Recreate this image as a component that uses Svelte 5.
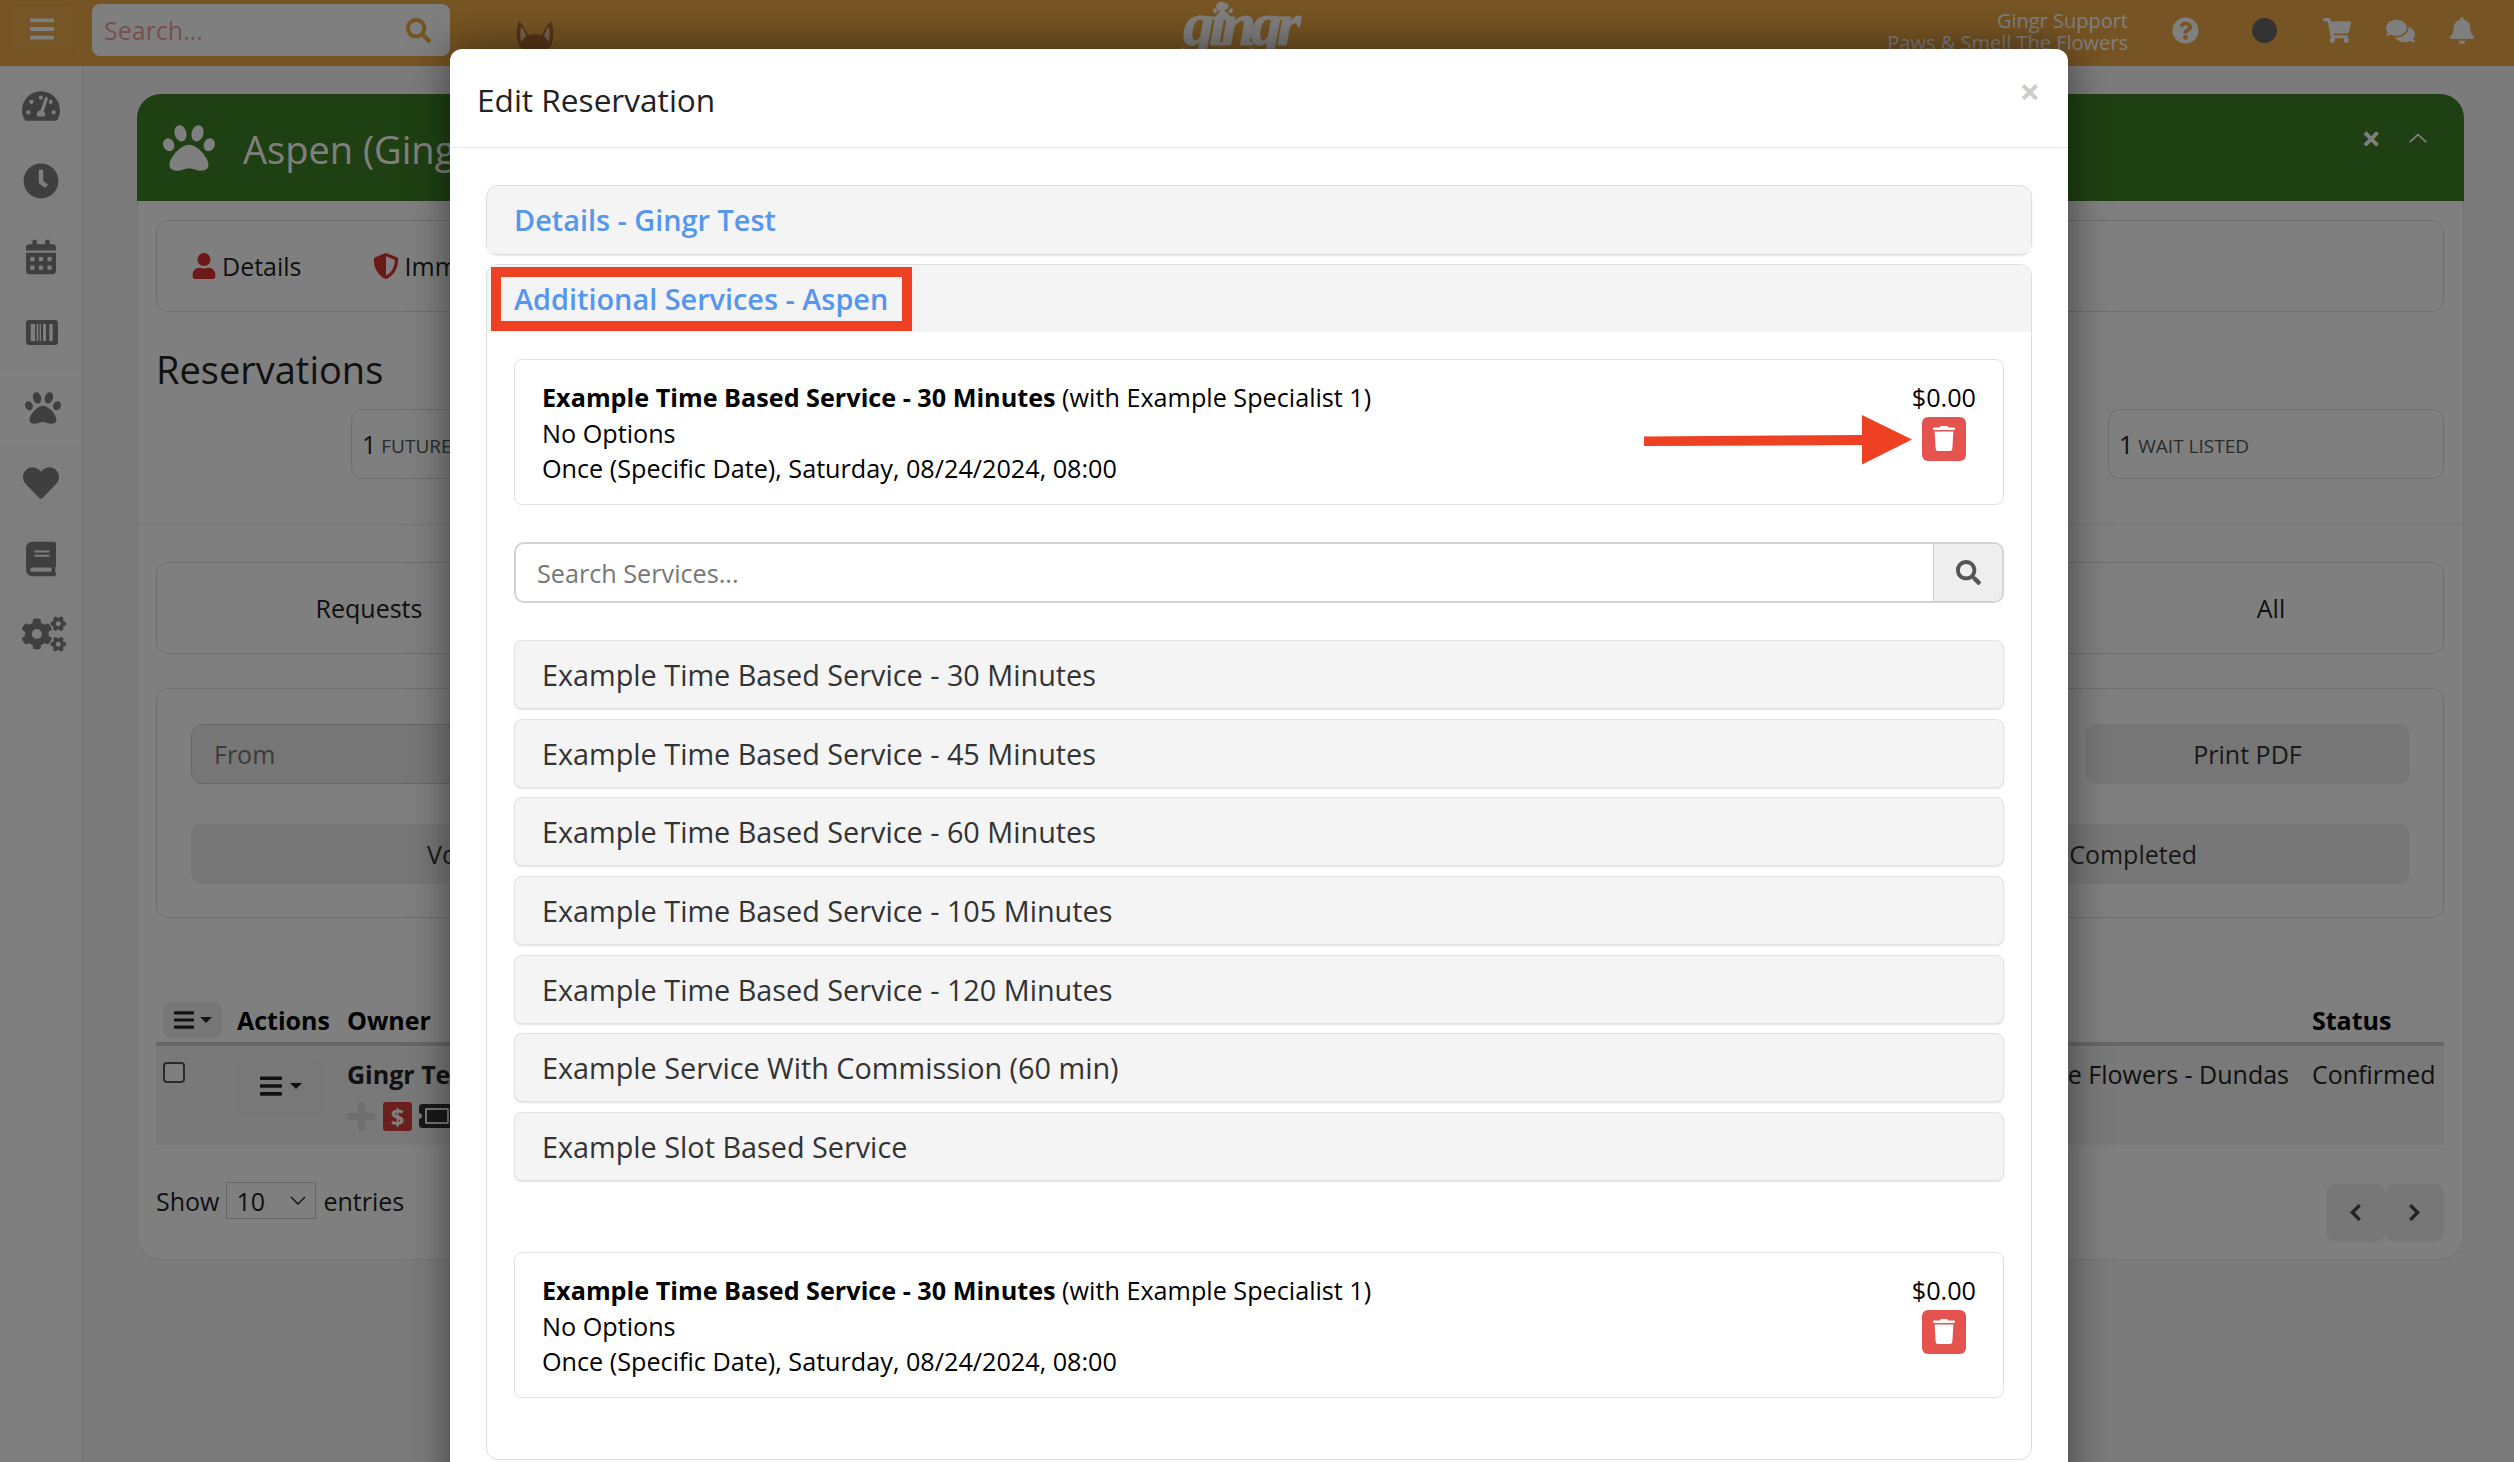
<script>
  const I = {
    search: "M505 442.7L405.3 343c-4.5-4.5-10.6-7-17-7H372c27.6-35.3 44-79.7 44-128C416 93.1 322.9 0 208 0S0 93.1 0 208s93.1 208 208 208c48.3 0 92.7-16.4 128-44v16.3c0 6.4 2.5 12.5 7 17l99.7 99.7c9.4 9.4 24.6 9.4 33.9 0l28.3-28.3c9.4-9.4 9.4-24.6.1-34zM208 336c-70.7 0-128-57.2-128-128 0-70.7 57.2-128 128-128 70.7 0 128 57.2 128 128 0 70.7-57.2 128-128 128z",
    trash: "M432 32H312l-9.4-18.7A24 24 0 0 0 281.1 0H166.8a23.72 23.72 0 0 0-21.4 13.3L136 32H16A16 16 0 0 0 0 48v16a16 16 0 0 0 16 16h416a16 16 0 0 0 16-16V48a16 16 0 0 0-16-16zM53.2 467a48 48 0 0 0 47.9 45h245.8a48 48 0 0 0 47.9-45L416 112H32z",
    clock: "M256,8C119,8,8,119,8,256S119,504,256,504,504,393,504,256,393,8,256,8Zm92.49,313h0l-20,25a16,16,0,0,1-22.49,2.5h0l-67-49.72a40,40,0,0,1-15-31.23V112a16,16,0,0,1,16-16h32a16,16,0,0,1,16,16V256l58,42.5A16,16,0,0,1,348.49,321Z",
    paw: "M256 224c-79.41 0-192 122.76-192 200.25 0 34.9 26.81 55.75 71.74 55.75 48.84 0 81.09-25.08 120.26-25.08 39.51 0 71.85 25.08 120.26 25.08 44.93 0 71.74-20.85 71.74-55.75C448 346.76 335.41 224 256 224zm-147.28-12.61c-10.4-34.65-42.44-57.09-71.56-50.13-29.12 6.96-44.29 40.69-33.89 75.34 10.4 34.65 42.44 57.09 71.56 50.13 29.12-6.96 44.29-40.69 33.89-75.34zm84.72-20.78c30.94-8.14 46.42-49.94 34.58-93.36s-46.52-72.01-77.46-63.87-46.42 49.94-34.58 93.36c11.84 43.42 46.52 72.01 77.46 63.87zm281.39-29.34c-29.12-6.96-61.15 15.48-71.56 50.13-10.4 34.65 4.77 68.38 33.89 75.34 29.12 6.96 61.15-15.48 71.56-50.13 10.4-34.65-4.77-68.38-33.89-75.34zm-156.27 29.34c30.94 8.14 65.62-20.45 77.46-63.87 11.84-43.42-3.64-85.21-34.58-93.36s-65.62 20.45-77.46 63.87c-11.84 43.42 3.64 85.22 34.58 93.36z",
    heart: "M462.3 62.6C407.5 15.9 326 24.3 275.7 76.2L256 96.5l-19.7-20.3C186.1 24.3 104.5 15.9 49.7 62.6c-62.8 53.6-66.1 149.8-9.9 207.9l193.5 199.8c12.5 12.9 32.8 12.9 45.3 0l193.5-199.8c56.3-58.1 53-154.3-9.8-207.9z",
    bell: "M224 512c35.32 0 63.97-28.65 63.97-64H160.03c0 35.35 28.65 64 63.97 64zm215.39-149.71c-19.32-20.76-55.47-51.99-55.47-154.29 0-77.7-54.48-139.9-127.94-155.16V32c0-17.67-14.32-32-31.98-32s-31.98 14.33-31.98 32v20.84C118.56 68.1 64.08 130.3 64.08 208c0 102.3-36.15 133.53-55.47 154.29-6 6.45-8.66 14.16-8.61 21.71.11 16.4 12.98 32 32.1 32h383.8c19.12 0 32-15.6 32.1-32 .05-7.55-2.61-15.27-8.61-21.71z",
    cart: "M528.12 301.319l47.273-208C578.806 78.301 567.391 64 551.99 64H159.208l-9.166-44.81C147.758 8.021 137.93 0 126.529 0H24C10.745 0 0 10.745 0 24v16c0 13.255 10.745 24 24 24h69.883l70.248 343.435C147.325 417.1 136 435.222 136 456c0 30.928 25.072 56 56 56s56-25.072 56-56c0-15.674-6.447-29.835-16.824-40h209.647C430.447 426.165 424 440.326 424 456c0 30.928 25.072 56 56 56s56-25.072 56-56c0-22.172-12.888-41.332-31.579-50.405l5.517-24.276c3.413-15.018-8.002-29.319-23.403-29.319H218.117l-6.545-32h293.145c11.206 0 20.92-7.754 23.403-18.681z",
    comments: "M416 192c0-88.4-93.1-160-208-160S0 103.6 0 192c0 34.3 14.1 65.9 38 92-13.4 30.2-35.5 54.2-35.8 54.5-2.2 2.3-2.8 5.7-1.5 8.7S4.8 352 8 352c36.6 0 66.9-12.3 88.7-25 32.2 15.7 70.3 25 111.3 25 114.9 0 208-71.6 208-160zm122 220c23.9-26 38-57.7 38-92 0-66.9-53.5-124.2-129.3-148.1.9 6.6 1.3 13.3 1.3 20.1 0 105.9-107.7 192-240 192-10.8 0-21.3-.8-31.7-1.9C207.8 439.6 281.8 480 368 480c41 0 79.1-9.2 111.3-25 21.8 12.7 52.1 25 88.7 25 3.2 0 6.1-1.9 7.3-4.8 1.3-2.9.7-6.3-1.5-8.7-.3-.3-22.4-24.2-35.8-54.5z",
    help: "M504 256c0 136.997-111.043 248-248 248S8 392.997 8 256C8 119.083 119.043 8 256 8s248 111.083 248 248zM262.655 90c-54.497 0-89.255 22.957-116.549 63.758-3.536 5.286-2.353 12.415 2.715 16.258l34.699 26.31c5.205 3.947 12.621 3.008 16.665-2.122 17.864-22.658 30.113-35.797 57.303-35.797 20.429 0 45.698 13.148 45.698 32.958 0 14.976-12.363 22.667-32.534 33.976C247.128 238.528 216 254.941 216 296v4c0 6.627 5.373 12 12 12h56c6.627 0 12-5.373 12-12v-1.333c0-28.462 83.186-29.647 83.186-106.667 0-58.002-60.165-102-116.531-102zM256 338c-25.365 0-46 20.635-46 46 0 25.364 20.635 46 46 46s46-20.636 46-46c0-25.365-20.635-46-46-46z",
    bars: "M16 132h416c8.837 0 16-7.163 16-16V76c0-8.837-7.163-16-16-16H16C7.163 60 0 67.163 0 76v40c0 8.837 7.163 16 16 16zm0 160h416c8.837 0 16-7.163 16-16v-40c0-8.837-7.163-16-16-16H16c-8.837 0-16 7.163-16 16v40c0 8.837 7.163 16 16 16zm0 160h416c8.837 0 16-7.163 16-16v-40c0-8.837-7.163-16-16-16H16c-8.837 0-16 7.163-16 16v40c0 8.837 7.163 16 16 16z",
    user: "M224 256c70.7 0 128-57.3 128-128S294.7 0 224 0 96 57.3 96 128s57.3 128 128 128zm89.6 32h-16.7c-22.2 10.2-46.9 16-72.9 16s-50.6-5.8-72.9-16h-16.7C60.2 288 0 348.2 0 422.4V464c0 26.5 21.5 48 48 48h352c26.5 0 48-21.5 48-48v-41.6c0-74.2-60.2-134.4-134.4-134.4z",
    shield: "M466.5 83.7l-192-80a48.15 48.15 0 0 0-36.9 0l-192 80C27.7 91.1 16 108.6 16 128c0 198.5 114.5 335.7 221.5 380.3 11.8 4.9 25.1 4.9 36.9 0C360.1 472.6 496 349.3 496 128c0-19.4-11.7-36.9-29.5-44.3zM256.1 446.3l-.1-381 175.9 73.3c-3.3 151.4-82.1 261.1-175.8 307.7z",
    cal: "M0 464c0 26.5 21.5 48 48 48h352c26.5 0 48-21.5 48-48V192H0v272zm320-196c0-6.6 5.4-12 12-12h40c6.6 0 12 5.4 12 12v40c0 6.6-5.4 12-12 12h-40c-6.6 0-12-5.4-12-12v-40zm0 128c0-6.6 5.4-12 12-12h40c6.6 0 12 5.4 12 12v40c0 6.6-5.4 12-12 12h-40c-6.6 0-12-5.4-12-12v-40zM192 268c0-6.6 5.4-12 12-12h40c6.6 0 12 5.4 12 12v40c0 6.6-5.4 12-12 12h-40c-6.6 0-12-5.4-12-12v-40zm0 128c0-6.6 5.4-12 12-12h40c6.6 0 12 5.4 12 12v40c0 6.6-5.4 12-12 12h-40c-6.6 0-12-5.4-12-12v-40zM64 268c0-6.6 5.4-12 12-12h40c6.6 0 12 5.4 12 12v40c0 6.6-5.4 12-12 12H76c-6.6 0-12-5.4-12-12v-40zm0 128c0-6.6 5.4-12 12-12h40c6.6 0 12 5.4 12 12v40c0 6.6-5.4 12-12 12H76c-6.6 0-12-5.4-12-12v-40zM400 64h-48V16c0-8.8-7.2-16-16-16h-32c-8.8 0-16 7.2-16 16v48H160V16c0-8.8-7.2-16-16-16h-32c-8.8 0-16 7.2-16 16v48H48C21.5 64 0 85.5 0 112v48h448v-48c0-26.5-21.5-48-48-48z",
    gauge: "M288 32C128.94 32 0 160.94 0 320c0 52.8 14.25 102.26 39.06 144.8 5.61 9.62 16.3 15.2 27.44 15.2h443c11.14 0 21.83-5.58 27.44-15.2C561.75 422.26 576 372.8 576 320c0-159.06-128.94-288-288-288zm0 64c14.71 0 26.58 10.13 30.32 23.65-1.11 2.26-2.64 4.23-3.45 6.67l-9.22 27.67c-5.13 3.49-10.97 6.01-17.64 6.01-17.67 0-32-14.33-32-32S270.33 96 288 96zM96 384c-17.67 0-32-14.33-32-32s14.33-32 32-32 32 14.33 32 32-14.33 32-32 32zm48-160c-17.67 0-32-14.33-32-32s14.33-32 32-32 32 14.33 32 32-14.33 32-32 32zm246.77-72.41l-61.33 184C343.13 347.33 352 364.54 352 384c0 11.72-3.38 22.55-8.88 32H232.88c-5.5-9.45-8.88-20.28-8.88-32 0-33.94 26.5-61.43 59.9-63.59l61.34-184.01c4.17-12.56 17.73-19.45 30.36-15.17 12.57 4.19 19.35 17.79 15.17 30.36zm14.66 57.2l15.52-46.55c3.47-1.29 7.13-2.23 11.05-2.23 17.67 0 32 14.33 32 32s-14.33 32-32 32c-11.38-.01-20.89-6.28-26.57-15.22zM480 384c-17.67 0-32-14.33-32-32s14.33-32 32-32 32 14.33 32 32-14.33 32-32 32z",
    barcode: "M3 0h26a3 3 0 0 1 3 3v19a3 3 0 0 1-3 3H3a3 3 0 0 1-3-3V3a3 3 0 0 1 3-3zM4.7 4v17H9V4zM10.6 4v17h1.7V4zM13.7 4v17H15V4zM17 4v17h3V4zM23.3 4v17h3.4V4z",
    book: "M448 360V24c0-13.3-10.7-24-24-24H96C43 0 0 43 0 96v320c0 53 43 96 96 96h328c13.3 0 24-10.7 24-24v-16c0-7.5-3.5-14.3-8.9-18.7-4.2-15.4-4.2-59.3 0-74.7 5.4-4.3 8.9-11.1 8.9-18.6zM128 134c0-3.3 2.7-6 6-6h212c3.3 0 6 2.7 6 6v20c0 3.3-2.7 6-6 6H134c-3.3 0-6-2.7-6-6v-20zm0 64c0-3.3 2.7-6 6-6h212c3.3 0 6 2.7 6 6v20c0 3.3-2.7 6-6 6H134c-3.3 0-6-2.7-6-6v-20zm253.4 250H96c-17.7 0-32-14.3-32-32 0-17.6 14.4-32 32-32h285.4c-1.9 17.1-1.9 46.9 0 64z",
    cogs: "M512.1 191l-8.2 14.3c-3 5.3-9.4 7.5-15.1 5.4-11.8-4.4-22.6-10.7-32.1-18.6-4.6-3.8-5.8-10.5-2.8-15.7l8.2-14.3c-6.9-8-12.3-17.3-15.9-27.4h-16.5c-6 0-11.2-4.3-12.2-10.3-2-12-2.1-24.6 0-37.1 1-6 6.2-10.4 12.2-10.4h16.5c3.6-10.1 9-19.4 15.9-27.4l-8.2-14.3c-3-5.2-1.9-11.9 2.8-15.7 9.5-7.9 20.4-14.2 32.1-18.6 5.7-2.1 12.1.1 15.1 5.4l8.2 14.3c10.5-1.9 21.2-1.9 31.7 0L552 6.3c3-5.3 9.4-7.5 15.1-5.4 11.8 4.4 22.6 10.7 32.1 18.6 4.6 3.8 5.8 10.5 2.8 15.7l-8.2 14.3c6.9 8 12.3 17.3 15.9 27.4h16.5c6 0 11.2 4.3 12.2 10.3 2 12 2.1 24.6 0 37.1-1 6-6.2 10.4-12.2 10.4h-16.5c-3.6 10.1-9 19.4-15.9 27.4l8.2 14.3c3 5.2 1.9 11.9-2.8 15.7-9.5 7.9-20.4 14.2-32.1 18.6-5.7 2.1-12.1-.1-15.1-5.4l-8.2-14.3c-10.4 1.9-21.2 1.9-31.7 0zm-10.5-58.8c38.5 29.6 82.4-14.3 52.8-52.8-38.5-29.7-82.4 14.3-52.8 52.8zM386.3 286.1l33.7 16.8c10.1 5.8 14.5 18.1 10.5 29.1-8.9 24.2-26.4 46.4-42.6 65.8-7.4 8.9-20.2 11.1-30.3 5.3l-29.1-16.8c-16 13.7-34.6 24.6-54.9 31.7v33.6c0 11.6-8.3 21.6-19.7 23.6-24.6 4.2-50.4 4.4-75.9 0-11.5-2-20-11.9-20-23.6V418c-20.3-7.2-38.9-18-54.9-31.7L74 403c-10 5.8-22.9 3.6-30.3-5.3-16.2-19.4-33.3-41.6-42.2-65.7-4-10.9.4-23.2 10.5-29.1l33.3-16.8c-3.9-20.9-3.9-42.4 0-63.4L12 205.8c-10.1-5.8-14.6-18.1-10.5-29 8.9-24.2 26-46.4 42.2-65.8 7.4-8.9 20.2-11.1 30.3-5.3l29.1 16.8c16-13.7 34.6-24.6 54.9-31.7V57.1c0-11.5 8.2-21.5 19.6-23.5 24.6-4.2 50.5-4.4 76-.1 11.5 2 20 11.9 20 23.6v33.6c20.3 7.2 38.9 18 54.9 31.7l29.1-16.8c10-5.8 22.9-3.6 30.3 5.3 16.2 19.4 33.2 41.6 42.1 65.8 4 10.9.1 23.2-10 29.1l-33.7 16.8c3.9 21 3.9 42.5 0 63.5zm-117.6 21.1c59.2-77-28.7-164.9-105.7-105.7-59.2 77 28.7 164.9 105.7 105.7zm243.4 182.7l-8.2 14.3c-3 5.3-9.4 7.5-15.1 5.4-11.8-4.4-22.6-10.7-32.1-18.6-4.6-3.8-5.8-10.5-2.8-15.7l8.2-14.3c-6.9-8-12.3-17.3-15.9-27.4h-16.5c-6 0-11.2-4.3-12.2-10.3-2-12-2.1-24.6 0-37.1 1-6 6.2-10.4 12.2-10.4h16.5c3.6-10.1 9-19.4 15.9-27.4l-8.2-14.3c-3-5.2-1.9-11.9 2.8-15.7 9.5-7.9 20.4-14.2 32.1-18.6 5.7-2.1 12.1.1 15.1 5.4l8.2 14.3c10.5-1.9 21.2-1.9 31.7 0l8.2-14.3c3-5.3 9.4-7.5 15.1-5.4 11.8 4.4 22.6 10.7 32.1 18.6 4.6 3.8 5.8 10.5 2.8 15.7l-8.2 14.3c6.9 8 12.3 17.3 15.9 27.4h16.5c6 0 11.2 4.3 12.2 10.3 2 12 2.1 24.6 0 37.1-1 6-6.2 10.4-12.2 10.4h-16.5c-3.6 10.1-9 19.4-15.9 27.4l8.2 14.3c3 5.2 1.9 11.9-2.8 15.7-9.5 7.9-20.4 14.2-32.1 18.6-5.7 2.1-12.1-.1-15.1-5.4l-8.2-14.3c-10.4 1.9-21.2 1.9-31.7 0zM501.6 431c38.5 29.6 82.4-14.3 52.8-52.8-38.5-29.6-82.4 14.3-52.8 52.8z",
    ticket: "M128 160h320v192H128V160zm400 96c0 26.51 21.49 48 48 48v96c0 26.51-21.49 48-48 48H48c-26.51 0-48-21.49-48-48v-96c26.51 0 48-21.49 48-48s-21.49-48-48-48v-96c0-26.51 21.49-48 48-48h480c26.51 0 48 21.49 48 48v96c-26.51 0-48 21.49-48 48zm-48-104c0-13.255-10.745-24-24-24H120c-13.255 0-24 10.745-24 24v208c0 13.255 10.745 24 24 24h336c13.255 0 24-10.745 24-24V152z"
  };
  const side = [
    { d: I.gauge, vb: "0 0 576 512", w: 38, h: 36 },
    { d: I.clock, vb: "0 0 512 512", w: 36, h: 36 },
    { d: I.cal, vb: "0 0 448 512", w: 30, h: 36 },
    { d: I.barcode, vb: "0 0 32 25", w: 32, h: 25, rule: "evenodd" },
    { d: I.paw, vb: "0 0 512 512", w: 36, h: 36, active: true },
    { d: I.heart, vb: "0 0 512 512", w: 36, h: 36 },
    { d: I.book, vb: "0 0 448 512", w: 30, h: 36 },
    { d: I.cogs, vb: "0 0 640 512", w: 44, h: 36 }
  ];
  const services = [
    "Example Time Based Service - 30 Minutes",
    "Example Time Based Service - 45 Minutes",
    "Example Time Based Service - 60 Minutes",
    "Example Time Based Service - 105 Minutes",
    "Example Time Based Service - 120 Minutes",
    "Example Service With Commission (60 min)",
    "Example Slot Based Service"
  ];
  const added = [0, 1];
</script>

<div class="page">
  <header class="top">
    <button class="ham" aria-label="menu"><svg viewBox="0 0 448 512" width="24" height="28"><path d={I.bars} /></svg></button>
    <div class="topsearch">
      <span>Search...</span>
      <svg viewBox="0 0 512 512" width="25" height="25"><path d={I.search} /></svg>
    </div>
    <svg class="cat" viewBox="0 0 40 32" width="40" height="32">
      <path d="M4 0c3 3 7 9 9 14 4-1 10-1 14 0 2-5 6-11 9-14 3 7 3 15 1 22-2 6-9 10-17 10S5 28 3 22C1 15 1 7 4 0z" fill="#b0682e" />
      <path d="M6 6c2 2 4 5 5 9l-5 6c-1-5-1-10 0-15zM34 6c-2 2-4 5-5 9l5 6c1-5 1-10 0-15z" fill="#e8c9a0" />
    </svg>
    <div class="logo">
      <svg class="logopaw" viewBox="0 0 512 512" width="20" height="20"><path d={I.paw} /></svg>
      <span>gingr</span>
    </div>
    <div class="account">
      <span>Gingr Support</span>
      <span>Paws &amp; Smell The Flowers</span>
    </div>
    <div class="topicons">
      <svg viewBox="0 0 512 512" width="27" height="27"><path d={I.help} /></svg>
      <span class="avatar"></span>
      <svg viewBox="0 0 576 512" width="28" height="25"><path d={I.cart} /></svg>
      <svg viewBox="0 0 576 512" width="29" height="26"><path d={I.comments} /></svg>
      <svg viewBox="0 0 448 512" width="24" height="27"><path d={I.bell} /></svg>
    </div>
  </header>

  <div class="main">
    <nav class="side">
      {#each side as s}
        <div class="sideitem" class:active={s.active}>
          <svg viewBox={s.vb} width={s.w} height={s.h}><path d={s.d} fill-rule={s.rule} /></svg>
        </div>
      {/each}
    </nav>
    <div class="content">
      <section class="card">
        <div class="cardhead">
          <svg viewBox="0 0 512 512" width="52" height="52"><path d={I.paw} /></svg>
          <h1>Aspen (Gingr Test)</h1>
          <span class="headbtns">
            <span class="hx">×</span>
            <svg viewBox="0 0 24 14" width="20" height="12"><path d="M2 12L12 3l10 9" fill="none" stroke="currentColor" stroke-width="2" /></svg>
          </span>
        </div>
        <div class="cardbody">
          <div class="tabs">
            <span class="tab"><svg viewBox="0 0 448 512" width="24" height="26"><path d={I.user} /></svg>Details</span>
            <span class="tab"><svg viewBox="0 0 512 512" width="26" height="26"><path d={I.shield} /></svg>Immunizations</span>
          </div>
          <h2>Reservations</h2>
          <div class="stats">
            <div class="stat"><b>1</b><small>FUTURE</small></div>
            <div class="stat wait"><b>1</b><small>WAIT LISTED</small></div>
          </div>
          <div class="rule"></div>
          <div class="bigtabs">
            <div class="bt req">Requests</div>
            <div class="bt all">All</div>
          </div>
          <div class="filters">
            <div class="frow">
              <div class="from">From</div>
              <div class="print">Print PDF</div>
            </div>
            <div class="frow second">
              <div class="fbtn">Voided</div>
              <div class="fbtn">Completed</div>
            </div>
          </div>
          <div class="thead">
            <span class="tool"><svg viewBox="0 0 448 512" width="20" height="24"><path d={I.bars} /></svg><i class="caret"></i></span>
            <b>Actions</b>
            <b>Owner</b>
            <span></span>
            <b>Status</b>
          </div>
          <div class="trow">
            <span class="check"></span>
            <span class="actbtn"><svg viewBox="0 0 448 512" width="22" height="26"><path d={I.bars} /></svg><i class="caret"></i></span>
            <div class="owner">
              <b>Gingr Test</b>
              <div class="marks">
                <svg class="plus" viewBox="0 0 29 29" width="29" height="29"><path d="M11 3.500a3.500 3.500 0 0 1 7 0V11h7.500a3.500 3.500 0 0 1 0 7H18v7.500a3.500 3.500 0 0 1-7 0V18H3.500a3.500 3.500 0 0 1 0-7H11z" /></svg>
                <span class="dollar">$</span>
                <svg viewBox="0 0 576 512" width="36" height="32"><path d={I.ticket} /></svg>
              </div>
            </div>
            <span class="loc">Paws &amp; Smell The Flowers - Dundas</span>
            <span>Confirmed</span>
          </div>
          <div class="foot">
            <span>Show</span>
            <span class="sel">10
              <svg viewBox="0 0 16 10" width="16" height="10"><path d="M1 1l7 7 7-7" fill="none" stroke="currentColor" stroke-width="1.4" /></svg>
            </span>
            <span>entries</span>
            <span class="pager">
              <span><svg viewBox="0 0 12 18" width="13" height="19"><path d="M10 2L3 9l7 7" fill="none" stroke="currentColor" stroke-width="3.2" /></svg></span>
              <span><svg viewBox="0 0 12 18" width="13" height="19"><path d="M2 2l7 7-7 7" fill="none" stroke="currentColor" stroke-width="3.2" /></svg></span>
            </span>
          </div>
        </div>
      </section>
    </div>
  </div>

  <div class="backdrop"></div>

  <div class="modal">
    <div class="mhead">
      <h3>Edit Reservation</h3>
      <span class="mclose">×</span>
    </div>
    <div class="mbody">
      <div class="panel closed"><div class="phead">Details - Gingr Test</div></div>
      <div class="panel open">
        <div class="phead">Additional Services - Aspen</div>
        <div class="pbody">
          {#each added as a, idx}
            <div class="item" class:last={idx === 1}>
              <div class="itext">
                <div><b>Example Time Based Service - 30 Minutes</b> (with Example Specialist 1)</div>
                <div>No Options</div>
                <div>Once (Specific Date), Saturday, 08/24/2024, 08:00</div>
              </div>
              <div class="iside">
                <div>$0.00</div>
                <button class="del" aria-label="delete"><svg viewBox="0 0 448 512" width="22" height="25"><path d={I.trash} /></svg></button>
              </div>
            </div>
            {#if idx === 0}
              <div class="searchbar">
                <div class="sinput">Search Services...</div>
                <div class="sbtn"><svg viewBox="0 0 512 512" width="25" height="25"><path d={I.search} /></svg></div>
              </div>
              <div class="svc">
                {#each services as s}<div class="svcrow">{s}</div>{/each}
              </div>
            {/if}
          {/each}
        </div>
      </div>
    </div>
  </div>

  <div class="redbox"></div>
  <svg class="arrow" viewBox="0 0 268 50" width="268" height="50">
    <path d="M0 21.5L218 20V0l50 24.5-50 25V30L0 31z" fill="#ee4023" />
  </svg>
</div>

<style>
  :global(body) { margin: 0; background: #f6f6f6; }
  .page {
    position: relative; width: 2514px; height: 1462px; overflow: hidden;
    font-family: "Open Sans", "Noto Sans", sans-serif; font-size: 25px; color: #000;
    background: #f6f6f6;
  }
  svg { display: block; fill: currentColor; }
  b { font-weight: 700; }

  .top { display: flex; align-items: flex-start; height: 66px; background: #eca846; }
  .ham { width: 64px; height: 50px; margin: 4px 18px 0 10px; padding: 0; border: 1px solid #e0a040; border-radius: 8px; background: #ecaa4c; color: #fff; display: flex; align-items: center; justify-content: center; }
  .topsearch { width: 358px; height: 52px; margin-top: 4px; border-radius: 8px; background: #fff; display: flex; align-items: center; justify-content: space-between; padding: 0 19px 0 12px; box-sizing: border-box; color: #eca846; flex: none; }
  .topsearch span { color: #f0a0a0; font-size: 25px; }
  .cat { margin: 21px 0 0 65px; flex: none; }
  .logo { position: relative; margin: -9px 0 0 628px; font: italic 700 62px/66px "Liberation Serif", serif; letter-spacing: -5px; color: #fff; width: 118px; flex: none; -webkit-text-stroke: 1px #fff; }
  .logopaw { position: absolute; left: 30px; top: 11px; }
  .account { margin-left: auto; display: flex; flex-direction: column; align-items: flex-end; padding-top: 9px; font-size: 20px; line-height: 24px; color: #fff; }
  .account span:last-child { margin-top: -2px; }
  .topicons { display: flex; align-items: center; margin: 17px 0 0 44px; color: #fff; height: 27px; padding-right: 40px; gap: 35px; }
  .avatar { width: 25px; height: 25px; border-radius: 50%; background: #666; margin: 0 11px 0 18px; }

  .main { display: flex; height: 1396px; }
  .side { width: 83px; flex: none; box-sizing: border-box; background: #fdfdfd; border-right: 1px solid #e5e5e5; padding-top: 2px; }
  .sideitem { height: 75.5px; display: flex; align-items: center; justify-content: center; color: #7f7f7f; }
  .sideitem:nth-child(4) { padding-left: 2px; }
  .sideitem:nth-child(5) { padding-left: 3px; }
  .sideitem:nth-child(8) { padding-left: 6px; }
  .sideitem.active { background: #fff; }
  .content { flex: 1; padding: 28px 50px 0 54px; min-width: 0; }
  .card { background: #fff; border: 1px solid #e6e6e6; border-top: 0; border-radius: 24px; height: 1166px; box-sizing: border-box; }
  .cardhead { height: 107px; background: #3f8024; border-radius: 24px 24px 0 0; display: flex; align-items: center; padding-left: 26px; color: #fff; margin: 0 -1px; }
  .cardhead h1 { font-size: 38px; font-weight: 400; margin: 2px 0 0 28px; }
  .headbtns { margin-left: auto; display: flex; align-items: center; gap: 27px; padding: 0 36px 0 0; margin-top: -19px; }
  .hx { font-size: 34px; font-weight: 700; line-height: 30px; }
  .cardbody { padding: 19px 19px 0 18px; }
  .tabs { height: 92px; border: 1px solid #ddd; border-radius: 12px; display: flex; align-items: center; gap: 71px; padding-left: 35px; box-sizing: border-box; margin-bottom: 0; }
  .tab { display: flex; align-items: center; gap: 6px; color: #222; }
  .tab svg { color: #d33; }
  h2 { font-size: 38px; font-weight: 400; margin: 31px 0 14px; line-height: 52px; color: #222; }
  .stats { display: flex; justify-content: space-between; padding: 0 0 0 195px; }
  .stat { width: 336px; height: 70px; border: 1px solid #ddd; border-radius: 12px; box-sizing: border-box; display: flex; align-items: center; gap: 5px; padding-left: 10px; color: #222; }
  .stat b { font-weight: 400; font-size: 25px; }
  .stat small { font-size: 19px; color: #555; padding-top: 3px; }
  .rule { border-top: 1px solid #e8e8e8; margin: 45px -19px 37px -18px; }
  .bigtabs { display: flex; justify-content: space-between; }
  .bt { height: 92px; border: 1px solid #ddd; border-radius: 12px; box-sizing: border-box; display: flex; align-items: center; justify-content: center; color: #222; }
  .req { width: 800px; padding-right: 374px; }
  .all { width: 800px; padding-left: 454px; }
  .filters { margin-top: 34px; height: 230px; border: 1px solid #ddd; border-radius: 12px; box-sizing: border-box; padding: 35px 33px 0 34px; }
  .frow { display: flex; justify-content: space-between; height: 60px; }
  .second { margin-top: 40px; }
  .from { width: 800px; border: 1px solid #ccc; border-radius: 12px; background: #eee; display: flex; align-items: center; padding-left: 22px; box-sizing: border-box; color: #777; font-size: 25px; }
  .print { width: 325px; background: #eee; border-radius: 10px; display: flex; align-items: center; justify-content: center; color: #333; }
  .fbtn { width: 800px; background: #eee; border-radius: 10px; display: flex; align-items: center; justify-content: center; color: #333; }
  .fbtn:first-child { padding-left: 0; justify-content: flex-start; padding-left: 236px; box-sizing: border-box; }
  .fbtn:last-child { justify-content: flex-end; padding-right: 213px; box-sizing: border-box; }
  .thead, .trow { display: grid; grid-template-columns: 81px 110px 800px 1165px 132px; }
  .thead { margin-top: 79px; height: 45px; align-items: center; border-bottom: 4px solid #ccc; font-size: 25px; }
  .tool { display: flex; align-items: center; gap: 6px; width: 59px; height: 36px; margin-left: 7px; justify-content: center; background: #eee; border-radius: 8px; color: #222; }
  .caret { width: 0; height: 0; border-left: 6px solid transparent; border-right: 6px solid transparent; border-top: 6px solid #222; }
  .trow { height: 99px; background: #f2f2f2; color: #222; align-items: start; padding-top: 11px; box-sizing: border-box; }
  .check { width: 22px; height: 21px; margin: 5px 0 0 7px; border: 2px solid #555; border-radius: 4px; box-sizing: border-box; background: #fff; }
  .actbtn { width: 88px; height: 58px; margin-top: 0; background: #f0f0f0; border-radius: 10px; display: flex; align-items: center; justify-content: center; gap: 8px; }
  .owner b { display: block; line-height: 34px; }
  .marks { display: flex; align-items: center; gap: 7px; height: 30px; margin-top: 10px; color: #333; }
  .plus { color: #ddd; flex: none; }
  .dollar { width: 29px; height: 29px; background: #d9403c; border-radius: 3px; color: #fff; font-weight: 700; font-size: 24px; line-height: 29px; text-align: center; flex: none; }
  .loc { text-align: right; padding-right: 23px; }
  .foot { display: flex; align-items: center; margin-top: 37px; height: 37px; color: #222; }
  .sel { width: 90px; height: 37px; margin: 0 7px 0 7px; border: 1px solid #ccc; box-sizing: border-box; display: flex; align-items: center; justify-content: space-between; padding: 0 9px; }
  .pager { margin-left: auto; display: flex; margin-top: 24px; }
  .pager span { width: 59px; height: 58px; background: #eee; border-radius: 10px; display: flex; align-items: center; justify-content: center; color: #444; }

  .backdrop { position: absolute; inset: 0; background: rgba(0, 0, 0, .5); }

  .modal { position: absolute; left: 450px; top: 49px; width: 1618px; height: 1500px; background: #fff; border-radius: 12px 12px 0 0; box-shadow: 0 0 40px rgba(0, 0, 0, .5); }
  .mhead { height: 99px; box-sizing: border-box; border-bottom: 1px solid #e5e5e5; display: flex; align-items: center; justify-content: space-between; padding: 2px 28px 0 27px; }
  h3 { margin: 0; font-size: 31.6px; font-weight: 400; color: #222; }
  .mclose { font-size: 36px; font-weight: 700; color: #ccc; line-height: 36px; margin-top: -14px; }
  .mbody { padding: 37px 36px 0; }
  .panel { border: 1px solid #ddd; border-radius: 12px; box-sizing: border-box; }
  .closed { height: 70px; background: #f4f4f4; box-shadow: 0 1px 2px rgba(0, 0, 0, .1); }
  .open { margin-top: 9px; height: 1196px; }
  .phead { height: 67px; display: flex; align-items: center; padding-left: 27px; font-size: 28.85px; font-weight: 600; color: #5597ec; background: #f4f4f4; border-radius: 12px 12px 0 0; }
  .pbody { padding: 27px 27px 0; }
  .item { display: flex; justify-content: space-between; height: 146px; border: 1px solid #e2e2e2; border-radius: 8px; box-sizing: border-box; padding: 20px 27px 0 27px; line-height: 35.5px; font-size: 25.2px; }
  .item.last { margin-top: 71px; }
  .iside { display: flex; flex-direction: column; align-items: flex-end; }
  .del { width: 44px; height: 44px; margin: 1px 10px 0 0; padding: 0; border: 0; border-radius: 6px; background: #e5534f; color: #fff; display: flex; align-items: center; justify-content: center; }
  .searchbar { display: flex; height: 61px; margin-top: 37px; border: 2px solid #d3d3d3; border-radius: 10px; box-sizing: border-box; overflow: hidden; }
  .sinput { flex: 1; display: flex; align-items: center; padding-left: 21px; color: #777; font-size: 25.2px; border-right: 1px solid #ccc; }
  .sbtn { width: 68px; background: #eee; display: flex; align-items: center; justify-content: center; color: #555; }
  .svc { display: flex; flex-direction: column; gap: 9.7px; margin-top: 37px; }
  .svcrow { height: 69px; display: flex; align-items: center; padding-left: 27px; box-sizing: border-box; background: #f4f4f4; border: 1px solid #e2e2e2; border-radius: 8px; box-shadow: 0 1px 2px rgba(0, 0, 0, .12); font-size: 28.8px; color: #333; }

  .redbox { position: absolute; left: 491px; top: 267px; width: 421px; height: 64px; border: 10px solid #ee4023; box-sizing: border-box; }
  .arrow { position: absolute; left: 1644px; top: 415px; }
</style>
